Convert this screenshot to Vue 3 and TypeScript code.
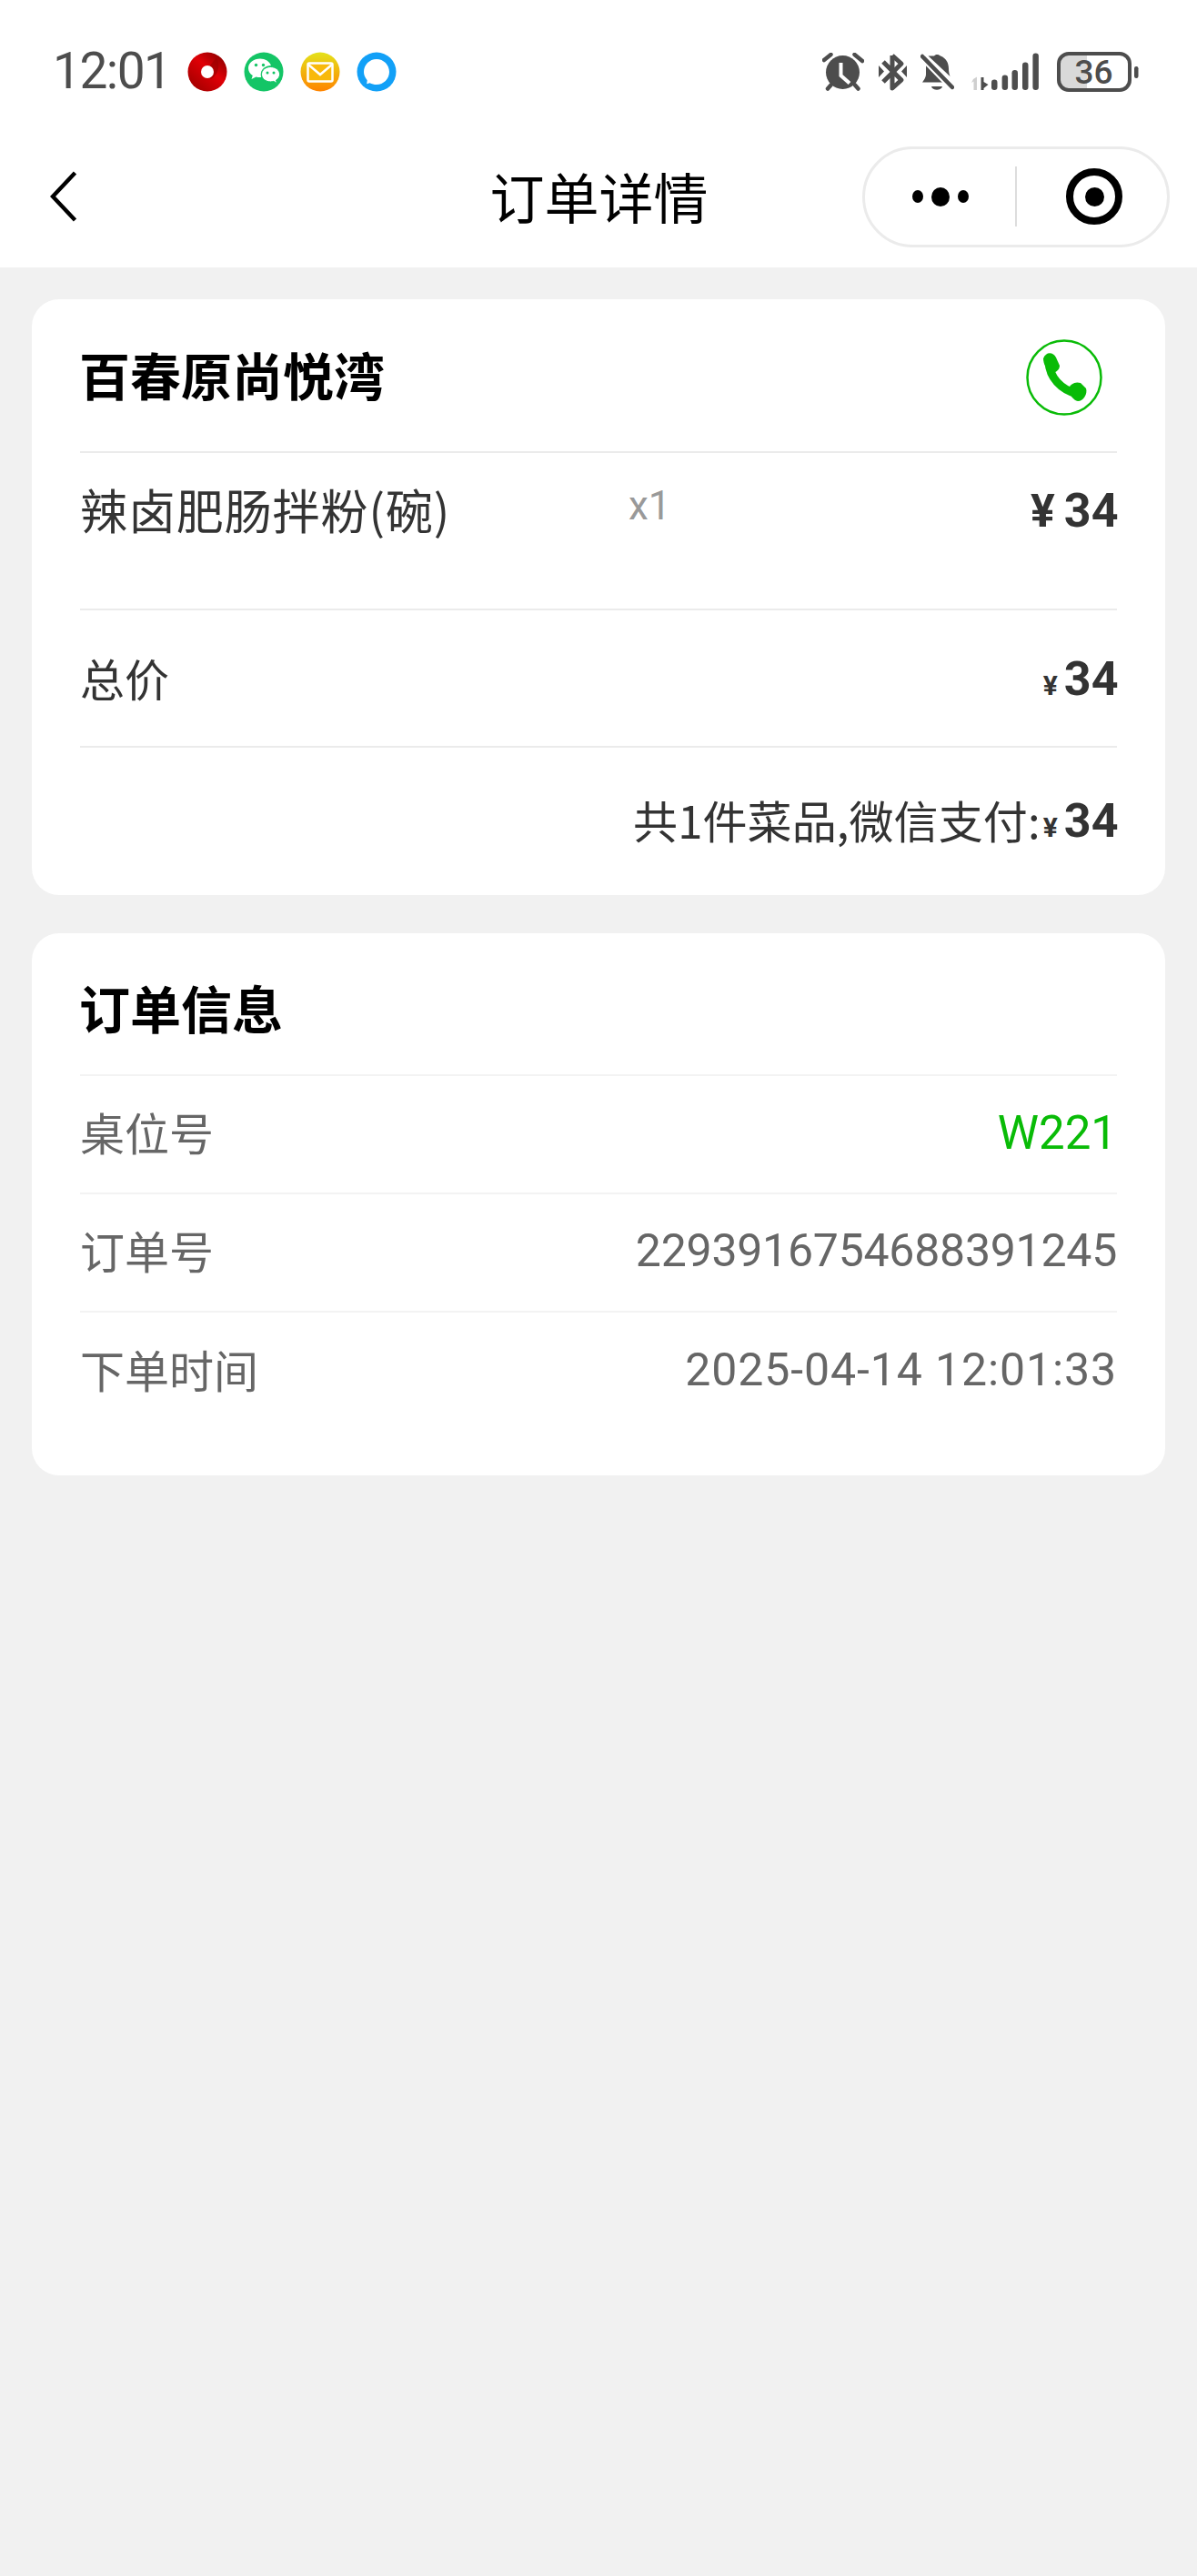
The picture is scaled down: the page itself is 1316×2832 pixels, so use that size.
<script setup lang="ts">
interface InfoRow { label: string; value: string; tone?: string }
const rows: InfoRow[] = [
  { label: '桌位号', value: 'W221', tone: 'green' },
  { label: '订单号', value: '2293916754688391245', tone: 'id' },
  { label: '下单时间', value: '2025-04-14 12:01:33', tone: 'date' },
]
const bars = [
  { x: 23, y: 29.5, h: 11.5 },
  { x: 34.6, y: 24.5, h: 16.5 },
  { x: 45.5, y: 19, h: 22 },
  { x: 57, y: 10.5, h: 30.5 },
  { x: 68.4, y: 0.5, h: 40.5 },
]
</script>

<template>
  <div class="page">
    <header class="top">
      <div class="status">
        <span class="time">12:01</span>
        <div class="apps">
          <svg class="app" viewBox="0 0 44 44">
            <defs>
              <linearGradient id="redg" x1="0.9" y1="0.1" x2="0.2" y2="0.9">
                <stop offset="0" stop-color="#8f0000" />
                <stop offset="0.45" stop-color="#e00006" />
                <stop offset="1" stop-color="#a90000" />
              </linearGradient>
            </defs>
            <circle cx="22" cy="22" r="21.5" fill="url(#redg)" />
            <path d="M32 6 A18 18 0 0 1 26 30 L18 24 Z" fill="#9c0000" opacity="0.7" />
            <circle cx="22" cy="22" r="7" fill="#fff" />
          </svg>
          <svg class="app" viewBox="0 0 44 44">
            <circle cx="22" cy="22" r="21.5" fill="#14c566" />
            <path d="M18 7.500c-7 0-13 4.500-13 10.500 0 3.300 1.800 6.100 4.800 8L8.500 30l5-2.600c1.400.4 2.900.6 4.500.6.400 0 .8 0 1.200 0-.3-1-.5-2-.5-3 0-5.800 5-10 11.300-10C28.500 10.500 23.500 7.500 18 7.500z" fill="#fff" />
            <path d="M29.500 16.500c-5.500 0-10 3.600-10 8.200s4.500 8.200 10 8.200c1.100 0 2.200-.2 3.300-.5l3.700 2-.9-3.300c2.400-1.500 4-3.800 4-6.400 0-4.600-4.600-8.200-10.100-8.200z" fill="#fff" stroke="#14c566" stroke-width="1" />
            <circle cx="13.500" cy="14.500" r="1.700" fill="#14c566" />
            <circle cx="21.500" cy="14.500" r="1.700" fill="#14c566" />
            <circle cx="26" cy="23" r="1.500" fill="#14c566" />
            <circle cx="33" cy="23" r="1.500" fill="#14c566" />
          </svg>
          <svg class="app" viewBox="0 0 44 44">
            <defs>
              <linearGradient id="yelg" x1="0" y1="0" x2="0" y2="1">
                <stop offset="0" stop-color="#e4e21a" />
                <stop offset="1" stop-color="#ff8400" />
              </linearGradient>
            </defs>
            <circle cx="22" cy="22" r="21.5" fill="url(#yelg)" />
            <rect x="8.500" y="12.500" width="27" height="20" rx="1.500" fill="#f8b90c" stroke="#fff" stroke-width="2.500" />
            <path d="M9 14 L22 25 L35 14" fill="none" stroke="#fff" stroke-width="2.500" />
          </svg>
          <svg class="app" viewBox="0 0 44 44">
            <circle cx="22" cy="22" r="21.5" fill="#12a0f7" />
            <path d="M22 8c7.700 0 14 6.300 14 14s-6.300 14-14 14c-2.800 0-5.200-.6-7.400-1.800l-3.400 1 .5-4C9 27.800 8 25 8 22 8 14.300 14.300 8 22 8z" fill="#fff" />
          </svg>
        </div>
        <div class="sys">
          <svg class="alarm" viewBox="0 0 46 42" fill="none" stroke="#4d4d4d" stroke-linecap="round">
            <circle cx="22.500" cy="21.500" r="18.500" fill="#4d4d4d" stroke="none" />
            <path d="M2 8 L9.500 2 M35.500 2 L44 9 M6 39.500 L9.500 35.500 M39.500 39.500 L36 35.500" stroke-width="4.500" />
            <path d="M20.500 11 V25 L30 33.500" stroke="#fff" stroke-width="4" stroke-linecap="butt" />
          </svg>
          <svg class="bt" viewBox="0 0 31 42" fill="none" stroke="#4d4d4d" stroke-width="5" stroke-linejoin="round">
            <path d="M15 3 V39 L25 30 L5 10" />
            <path d="M15 3 L25 12 L5 32" />
            <path d="M0 14 L6 20.500 L0 27 Z M31 14 L25 20.500 L31 27 Z" fill="#4d4d4d" stroke="none" />
          </svg>
          <svg class="bell" viewBox="0 0 37 42">
            <path d="M16 2.500c1-2 5-2.300 7 0 6.500 2.500 9 8 9 14 0 3 .5 6 1.500 8.500L9.500 2.500z" fill="#4d4d4d" transform="translate(-1 1)" />
            <path d="M6 16 C6 14.500 6.200 13.500 6.500 12.500 L25.500 32.500 H2 C2 32.500 5.800 28 6 24 Z" fill="#4d4d4d" />
            <path d="M12 37 h12 c-1 5-11 5-12 0 z" fill="#4d4d4d" />
            <path d="M2.500 5 L34.500 38" stroke="#fff" stroke-width="8" />
            <path d="M2 4 L35 38" stroke="#4d4d4d" stroke-width="4.500" stroke-linecap="round" />
          </svg>
          <svg class="sig" viewBox="0 0 76 42">
            <path d="M3 29 L7 26.500 V41 H3.500 V31.500 L1 33 Z" fill="#cfcfcf" />
            <path d="M11.500 27 H14.500 V32 L19.500 35 L14.500 39 V41 H11.500 Z" fill="#4d4d4d" />
            <rect v-for="b in bars" :key="b.x" :x="b.x" :y="b.y" width="6.500" :height="b.h" rx="3.200" fill="#4d4d4d" />
          </svg>
          <svg class="bat" viewBox="0 0 90 44">
            <path d="M12 2 H33 V42 H12 A10 10 0 0 1 2 32 V12 A10 10 0 0 1 12 2 Z" fill="#d9d9d9" />
            <rect x="2" y="2" width="78" height="40" rx="11" fill="none" stroke="#4d4d4d" stroke-width="4" />
            <rect x="85" y="16" width="4.500" height="13" rx="2.200" fill="#4d4d4d" />
            <text x="40.500" y="35" text-anchor="middle" class="bat-text">36</text>
          </svg>
        </div>
      </div>
      <nav class="nav">
        <div class="nav-left">
          <svg class="back" viewBox="0 0 30 56" fill="none" stroke="#000" stroke-width="4.500">
            <path d="M27.500 2 L3 28 L27.500 54" />
          </svg>
        </div>
        <h1 class="nav-title">订单详情</h1>
        <div class="nav-right">
          <div class="capsule">
            <div class="cap-dots">
              <i class="dot small"></i><i class="dot big"></i><i class="dot small"></i>
            </div>
            <div class="cap-sep"></div>
            <div class="cap-target">
              <i class="target-dot"></i>
            </div>
          </div>
        </div>
      </nav>
    </header>

    <main class="main">
      <section class="card">
        <div class="head">
          <h2 class="card-title">百春原尚悦湾</h2>
          <svg class="phone" viewBox="0 0 84 84" fill="none">
            <circle cx="42" cy="42" r="40.500" stroke="#09bb07" stroke-width="2.500" />
            <path d="M25 25 C26 42 38 55 56 60" stroke="#09bb07" stroke-width="9" stroke-linecap="round" />
            <path d="M19 21 C22 13 30 14 33 20 L37 29 C37 34 32 37 27 38 C22 32 19 27 19 21 Z" fill="#09bb07" />
            <path d="M46 55 C49 49 54 46 60 48 L66 54 C68 60 63 68 57 68 C52 67 48 61 46 55 Z" fill="#09bb07" />
          </svg>
        </div>
        <div class="item">
          <span class="item-name">辣卤肥肠拌粉(碗)</span>
          <span class="item-qty">x1</span>
          <span class="price"><span class="yen-big">¥</span><span class="num">34</span></span>
        </div>
        <div class="total">
          <span class="total-label">总价</span>
          <span class="price shifted"><span class="yen">¥</span><span class="num">34</span></span>
        </div>
        <div class="paid">
          <span class="paid-text">共1件菜品,微信支付:</span>
          <span class="price shifted"><span class="yen">¥</span><span class="num">34</span></span>
        </div>
      </section>

      <section class="card info">
        <h2 class="info-title"><span class="info-title-text">订单信息</span></h2>
        <div v-for="r in rows" :key="r.label" class="info-row">
          <span class="info-label">{{ r.label }}</span>
          <span class="info-value" :class="r.tone">{{ r.value }}</span>
        </div>
      </section>
    </main>
  </div>
</template>

<style scoped>
.page {
  width: 1316px;
  min-height: 2832px;
  background: #f1f1f1;
  font-family: "Noto Sans CJK SC", "Noto Sans", sans-serif;
  display: flex;
  flex-direction: column;
}
.top {
  background: #fff;
}
.status {
  height: 144px;
  box-sizing: border-box;
  padding: 13px 64px 0 58px;
  display: flex;
  align-items: center;
}
.time {
  font-family: "Roboto", sans-serif;
  font-size: 55px;
  color: #4d4d4d;
  letter-spacing: -1.500px;
  line-height: 1;
  width: 148px;
}
.apps {
  display: flex;
  gap: 18px;
}
.app {
  width: 44px;
  height: 44px;
  display: block;
}
.sys {
  margin-left: auto;
  display: flex;
  align-items: center;
}
.alarm { width: 46px; height: 42px; margin-right: 16px; }
.bt { width: 31px; height: 42px; margin-right: 15px; }
.bell { width: 37px; height: 42px; margin-right: 18px; }
.sig { width: 76px; height: 42px; margin-right: 19px; }
.bat { width: 90px; height: 44px; }
.bat-text {
  font-family: "Roboto", sans-serif;
  font-size: 37px;
  font-weight: 500;
  fill: #4d4d4d;
}
.nav {
  height: 150px;
  box-sizing: border-box;
  padding: 0 30px 6px 55px;
  display: grid;
  grid-template-columns: 1fr auto 1fr;
  align-items: center;
}
.nav-left {
  display: flex;
}
.back {
  width: 30px;
  height: 56px;
  display: block;
}
.nav-title {
  margin: 0 0 3px;
  font-size: 60px;
  font-weight: 400;
  color: #000;
  line-height: 1;
  transform: translateX(-12px);
}
.nav-right {
  display: flex;
  justify-content: flex-end;
}
.capsule {
  width: 338px;
  height: 111px;
  box-sizing: border-box;
  border: 3px solid #ebebeb;
  border-radius: 56px;
  display: flex;
  align-items: center;
  background: #fff;
}
.cap-dots {
  width: 165px;
  display: flex;
  align-items: center;
  justify-content: center;
  gap: 9px;
  box-sizing: border-box;
}
.dot {
  display: block;
  border-radius: 50%;
  background: #000;
}
.dot.small { width: 12px; height: 14px; }
.dot.big { width: 20px; height: 21px; }
.cap-sep {
  width: 2px;
  height: 66px;
  background: #ddd;
}
.cap-target {
  width: 62px;
  height: 62px;
  margin-left: 54px;
  box-sizing: border-box;
  border: 8px solid #000;
  border-radius: 50%;
  display: flex;
  align-items: center;
  justify-content: center;
}
.target-dot {
  display: block;
  width: 21px;
  height: 21px;
  border-radius: 50%;
  background: #000;
}
.main {
  padding: 35px 35px 0;
  display: flex;
  flex-direction: column;
  gap: 42px;
}
.card {
  background: #fff;
  border-radius: 30px;
  padding: 0 53px;
}
.head {
  height: 169px;
  box-sizing: border-box;
  border-bottom: 2px solid #ebebeb;
  display: flex;
  align-items: center;
  justify-content: space-between;
  padding: 0 16px 0 0;
}
.card-title {
  margin: 0 0 3px -1px;
  font-size: 56px;
  font-weight: 700;
  color: #000;
  line-height: 1;
}
.phone {
  width: 84px;
  height: 84px;
  margin-top: 4px;
}
.item {
  height: 173px;
  box-sizing: border-box;
  border-bottom: 2px solid #ebebeb;
  padding-top: 36px;
  display: flex;
  align-items: flex-start;
  color: #333;
}
.item-name {
  font-size: 52px;
  line-height: 1;
  letter-spacing: 0.900px;
  width: 603px;
  white-space: nowrap;
}
.item-qty {
  font-family: "Roboto", sans-serif;
  font-size: 44px;
  color: #999;
  line-height: 1;
  margin-top: 0;
}
.item .price {
  margin-left: auto;
  margin-top: 2px;
}
.price {
  color: #333;
  font-family: "Roboto", sans-serif;
  font-weight: 700;
  line-height: 1;
  display: inline-flex;
  align-items: baseline;
  white-space: nowrap;
  margin-right: -2px;
}
.price.shifted {
  margin-top: 3px;
}
.num {
  font-size: 52px;
  line-height: 1;
  letter-spacing: 0.300px;
}
.yen-big {
  font-size: 50px;
  margin-right: 10px;
}
.yen {
  font-size: 30px;
  margin-right: 7px;
}
.total {
  height: 151px;
  box-sizing: border-box;
  border-bottom: 2px solid #ebebeb;
  display: flex;
  align-items: center;
  justify-content: space-between;
  color: #333;
}
.total-label {
  font-size: 49px;
  line-height: 1;
  margin-bottom: 2px;
}
.paid {
  height: 162px;
  box-sizing: border-box;
  padding-bottom: 4px;
  display: flex;
  align-items: center;
  justify-content: flex-end;
  color: #333;
}
.paid-text {
  font-size: 49px;
  line-height: 1;
  margin-right: 3px;
  margin-bottom: 2px;
  letter-spacing: 0.100px;
}
.info {
  padding-bottom: 49px;
}
.info-title {
  margin: 0;
  height: 157px;
  box-sizing: border-box;
  border-bottom: 2px solid #f3f3f3;
  display: flex;
  align-items: center;
  font-size: 56px;
  font-weight: 700;
  color: #000;
  line-height: 1;
}
.info-title-text {
  margin-top: 6px;
  margin-left: -1px;
}
.info-row {
  height: 130px;
  box-sizing: border-box;
  border-bottom: 2px solid #f3f3f3;
  display: flex;
  align-items: center;
  justify-content: space-between;
}
.info-row:last-child {
  border-bottom: none;
}
.info-label {
  font-size: 49px;
  color: #666;
  line-height: 1;
  margin-bottom: 8px;
}
.info-value {
  font-family: "Roboto", sans-serif;
  font-size: 50px;
  color: #666;
  line-height: 1;
  margin-bottom: 4px;
}
.info-value.green {
  color: #09bb07;
  font-size: 51px;
}
.info-value.id {
  letter-spacing: -0.250px;
}
.info-value.date {
  letter-spacing: 0.900px;
}
</style>
